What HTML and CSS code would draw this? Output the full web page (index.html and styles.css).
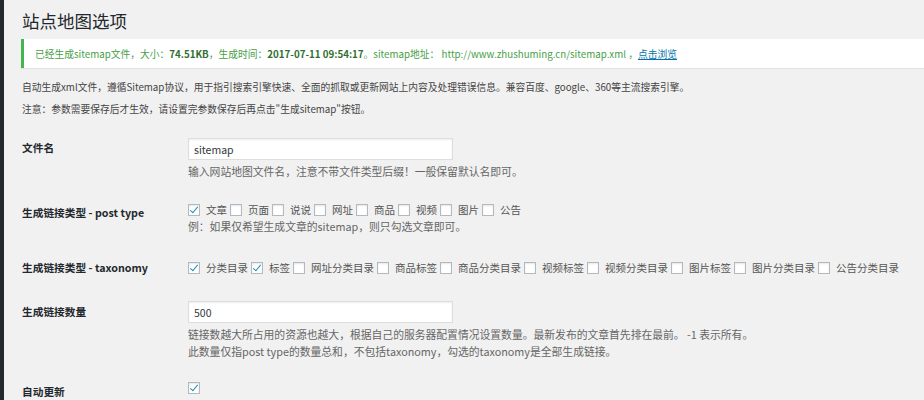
FILE: index.html
```html
<!DOCTYPE html>
<html lang="zh-CN">
<head>
<meta charset="utf-8">
<title>站点地图选项</title>
<link rel="stylesheet" href="styles.css">
</head>
<body>
<div class="layout">
  <div class="sidebar"></div>
  <main class="wrap">
    <h1 class="title">站点地图选项</h1>
    <div class="notice">
      <p>已经生成sitemap文件，大小：<b>74.51KB</b>，生成时间：<b>2017-07-11 09:54:17</b>。sitemap地址： http://www.zhushuming.cn/sitemap.xml ，<a href="#">点击浏览</a></p>
    </div>
    <p class="intro">自动生成xml文件，遵循Sitemap协议，用于指引搜索引擎快速、全面的抓取或更新网站上内容及处理错误信息。兼容百度、google、360等主流搜索引擎。</p>
    <p class="intro intro-2">注意：参数需要保存后才生效，请设置完参数保存后再点击"生成sitemap"按钮。</p>

    <div class="form">
      <div class="row row-1">
        <div class="label">文件名</div>
        <div class="field">
          <input class="text" type="text" value="sitemap">
          <p class="desc">输入网站地图文件名，注意不带文件类型后缀！一般保留默认名即可。</p>
        </div>
      </div>

      <div class="row row-2">
        <div class="label">生成链接类型 - post type</div>
        <div class="field">
          <div class="checks">
            <label><input type="checkbox" checked>文章</label>
            <label><input type="checkbox">页面</label>
            <label><input type="checkbox">说说</label>
            <label><input type="checkbox">网址</label>
            <label><input type="checkbox">商品</label>
            <label><input type="checkbox">视频</label>
            <label><input type="checkbox">图片</label>
            <label><input type="checkbox">公告</label>
          </div>
          <p class="desc desc-tight">例：如果仅希望生成文章的sitemap，则只勾选文章即可。</p>
        </div>
      </div>

      <div class="row row-3">
        <div class="label">生成链接类型 - taxonomy</div>
        <div class="field">
          <div class="checks">
            <label><input type="checkbox" checked>分类目录</label>
            <label><input type="checkbox" checked>标签</label>
            <label><input type="checkbox">网址分类目录</label>
            <label><input type="checkbox">商品标签</label>
            <label><input type="checkbox">商品分类目录</label>
            <label><input type="checkbox">视频标签</label>
            <label><input type="checkbox">视频分类目录</label>
            <label><input type="checkbox">图片标签</label>
            <label><input type="checkbox">图片分类目录</label>
            <label><input type="checkbox">公告分类目录</label>
          </div>
        </div>
      </div>

      <div class="row row-4">
        <div class="label">生成链接数量</div>
        <div class="field">
          <input class="text" type="text" value="500">
          <p class="desc">链接数越大所占用的资源也越大，根据自己的服务器配置情况设置数量。最新发布的文章首先排在最前。 -1 表示所有。<br>此数量仅指post type的数量总和，不包括taxonomy，勾选的taxonomy是全部生成链接。</p>
        </div>
      </div>

      <div class="row row-5">
        <div class="label">自动更新</div>
        <div class="field">
          <div class="checks">
            <label><input type="checkbox" checked></label>
          </div>
        </div>
      </div>
    </div>
  </main>
</div>
</body>
</html>
```

FILE: styles.css
```css
* { box-sizing: border-box; }

html, body {
  margin: 0;
  padding: 0;
  height: 100%;
  background: #f1f1f1;
  overflow: hidden;
}

body {
  font-family: "Noto Sans CJK SC", "Noto Sans", sans-serif;
  color: #444;
  font-size: 10px;
}

.layout {
  display: flex;
  min-height: 100%;
}

.sidebar {
  width: 4px;
  flex: none;
  background: #23282d;
}

.wrap {
  flex: 1;
  padding-left: 17px;
}

.title {
  margin: 9px 0 0 1px;
  font-size: 17.5px;
  line-height: 24px;
  font-weight: 400;
  color: #23282d;
}

.notice {
  margin-top: 6px;
  height: 29px;
  background: #fff;
  border-left: 3px solid #46b450;
  box-shadow: 0 1px 1px rgba(0, 0, 0, .06);
  display: flex;
  align-items: center;
  padding-left: 11px;
}

.notice p {
  margin: 0;
  font-size: 9.75px;
  line-height: 16px;
  color: #46a046;
  white-space: nowrap;
}

.notice b {
  color: #2f6f2f;
  font-weight: 700;
}

.notice a {
  color: #0073aa;
  text-decoration: underline;
}

.intro {
  margin: 11px 0 0 1px;
  font-size: 9.75px;
  line-height: 16px;
  color: #444;
  white-space: nowrap;
}

.intro-2 {
  margin-top: 6px;
}

.form {
  margin-top: 21px;
}

.row {
  display: grid;
  grid-template-columns: 166px 1fr;
  margin-left: 1px;
}

.label {
  font-size: 10.7px;
  font-weight: 700;
  color: #23282d;
  line-height: 17px;
}

.field {
  min-width: 0;
}

.row-1 .label { padding-top: 1px; }
.row-2 { margin-top: 21px; }
.row-2 .label { padding-top: 3px; }
.row-3 { margin-top: 24px; }
.row-3 .label { padding-top: 0; }
.row-4 { margin-top: 25px; }
.row-4 .label { padding-top: 2px; }
.row-5 { margin-top: 19px; }
.row-5 .label { padding-top: 4px; }

.text {
  display: block;
  width: 265px;
  height: 22px;
  margin: 0;
  padding: 0 5px;
  border: 1px solid #ddd;
  background: #fff;
  box-shadow: inset 0 1px 2px rgba(0, 0, 0, .07);
  font-family: inherit;
  font-size: 10.5px;
  color: #32373c;
  outline: none;
}

.desc {
  margin: 3px 0 0;
  font-size: 10.8px;
  line-height: 17px;
  color: #666;
  white-space: nowrap;
}

.desc-tight {
  margin-top: 0;
}

.checks {
  display: flex;
  align-items: center;
  height: 17px;
  white-space: nowrap;
}

.checks label {
  display: inline-flex;
  align-items: center;
  font-size: 10.5px;
  color: #555;
  margin-right: 3px;
}

.checks input {
  appearance: none;
  -webkit-appearance: none;
  width: 12px;
  height: 12px;
  margin: 0 6px 0 0;
  border: 1px solid #b4b9be;
  background: #fff;
  box-shadow: inset 0 1px 2px rgba(0, 0, 0, .1);
  position: relative;
  flex: none;
}

.checks input:checked::before {
  content: "";
  position: absolute;
  left: 3px;
  top: 0;
  width: 3px;
  height: 7px;
  border-right: 1.5px solid #1e8cbe;
  border-bottom: 1.5px solid #1e8cbe;
  transform: rotate(40deg);
}
```
